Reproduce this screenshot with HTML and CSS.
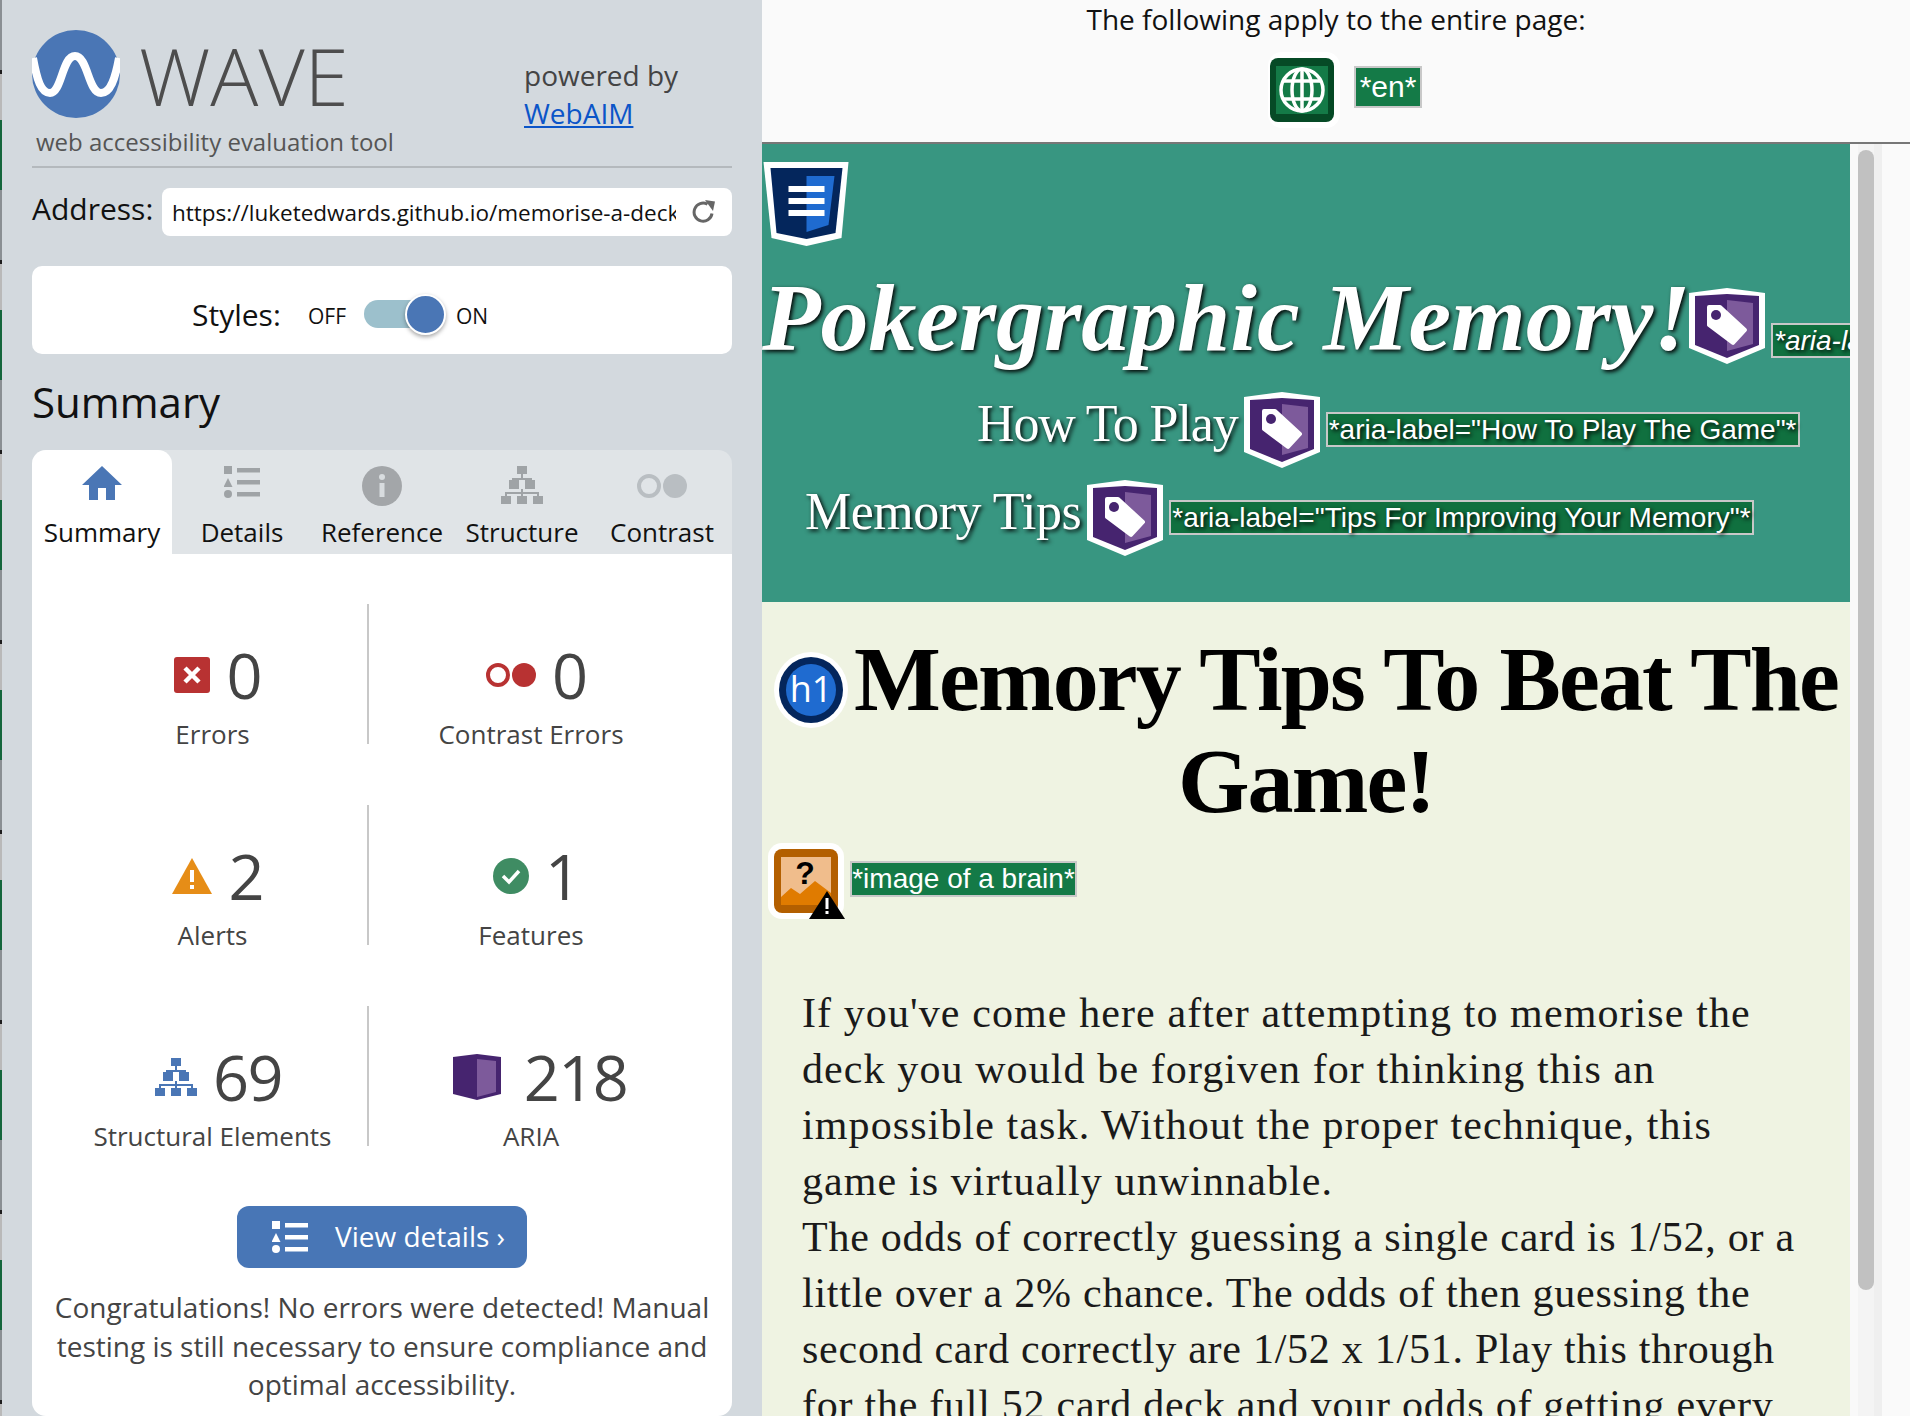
FILE: index.html
```html
<!DOCTYPE html>
<html lang="en">
<head>
<meta charset="utf-8">
<title>WAVE report</title>
<link rel="stylesheet" href="styles.css">
</head>
<body>
<svg class="defs" width="0" height="0" aria-hidden="true">
  <symbol id="tag" viewBox="0 0 76 76">
    <path d="M0 5 L38 0 L76 5 V60 L38 76 L0 60Z" fill="#fff"/>
    <path d="M6 8 L38 6 L70 8 V57 L38 70 L6 57Z" fill="#46246f"/>
    <path d="M38 12 L64 15 V56 L38 63Z" fill="#7d5a9b"/>
    <path d="M20 19 H31 L56 42 L44 55 L20 37Z" fill="#fff" stroke="#fff" stroke-width="4" stroke-linejoin="round"/>
    <circle cx="27" cy="27" r="5" fill="#46246f"/>
  </symbol>
  <symbol id="tree" viewBox="0 0 42 38">
    <rect x="16" y="0" width="10" height="8"/><rect x="20" y="8" width="2" height="5"/>
    <rect x="11" y="12" width="20" height="2"/><rect x="8" y="14" width="10" height="9"/><rect x="24" y="14" width="10" height="9"/>
    <rect x="4" y="26" width="34" height="2"/><rect x="4" y="26" width="2" height="4"/><rect x="20" y="23" width="2" height="7"/><rect x="36" y="26" width="2" height="4"/>
    <rect x="0" y="30" width="10" height="8"/><rect x="16" y="30" width="10" height="8"/><rect x="32" y="30" width="10" height="8"/>
  </symbol>
  <symbol id="list" viewBox="0 0 36 32">
    <rect x="0" y="0" width="8" height="8"/><path d="M4 12 L8.500 21 H-.5Z"/><circle cx="4" cy="28" r="4"/>
    <rect x="13" y="2" width="23" height="4.500"/><rect x="13" y="14" width="23" height="4.500"/><rect x="13" y="26" width="23" height="4.500"/>
  </symbol>
</svg>

<div class="app">
  <div class="edge"></div>
  <aside class="sidebar">
    <header class="brand">
      <div class="brand-left">
        <div class="logo-row">
          <svg class="logo" viewBox="0 0 88 88"><circle cx="44" cy="44" r="44" fill="#4a76b5"/><path d="M1 28 C5 50 9 63 18 63 C30 63 30 26 43 26 C56 26 56 63 69 63 C78 63 83 50 87 28" fill="none" stroke="#fff" stroke-width="8"/></svg>
          <span class="wave">WAVE</span>
        </div>
        <div class="tagline">web accessibility evaluation tool</div>
      </div>
      <div class="powered">powered by<br><a href="#">WebAIM</a></div>
    </header>
    <div class="address">
      <label class="address-label">Address:</label>
      <div class="address-box">
        <span class="url">https://luketedwards.github.io/memorise-a-deck</span>
        <svg class="reload" viewBox="0 0 24 24"><path d="M20 13.500 A9 9 0 1 1 15.500 4.300" fill="none" stroke="#666" stroke-width="3"/><path d="M13 0 L23 1.500 L21 11Z" fill="#666"/></svg>
      </div>
    </div>
    <div class="styles-card">
      <span class="styles-label">Styles:</span>
      <span class="onoff off">OFF</span>
      <span class="toggle"><span class="knob"></span></span>
      <span class="onoff">ON</span>
    </div>
    <h2 class="summary-title">Summary</h2>
    <nav class="tabs">
      <div class="tab active">
        <svg class="tab-icon" width="40" height="34" viewBox="0 0 40 34"><path d="M20 0 L40 19 H33 V34 H24 V22 H16 V34 H7 V19 H0Z" fill="#4a76b5"/></svg>
        <span>Summary</span>
      </div>
      <div class="tab">
        <svg class="tab-icon grey" width="36" height="32"><use href="#list"/></svg>
        <span>Details</span>
      </div>
      <div class="tab">
        <svg class="tab-icon" width="40" height="40" viewBox="0 0 40 40"><circle cx="20" cy="20" r="20" fill="#a3a6a9"/><circle cx="20" cy="11" r="3" fill="#d8dcdf"/><rect x="17.500" y="17" width="5" height="14" fill="#d8dcdf"/></svg>
        <span>Reference</span>
      </div>
      <div class="tab">
        <svg class="tab-icon grey" width="42" height="38"><use href="#tree"/></svg>
        <span>Structure</span>
      </div>
      <div class="tab">
        <svg class="tab-icon low" width="50" height="24" viewBox="0 0 50 24"><circle cx="12" cy="12" r="10" fill="none" stroke="#b9bec2" stroke-width="4"/><circle cx="38" cy="12" r="12" fill="#b9bec2"/></svg>
        <span>Contrast</span>
      </div>
    </nav>
    <section class="panel">
      <div class="stats">
        <div class="stat left">
          <div class="stat-top"><svg class="ic" width="36" height="36" viewBox="0 0 36 36"><rect width="36" height="36" rx="3" fill="#b83232"/><path d="M11 11 L25 25 M25 11 L11 25" stroke="#fff" stroke-width="4.500"/></svg><span class="num">0</span></div>
          <div class="stat-label">Errors</div>
        </div>
        <div class="stat">
          <div class="stat-top"><svg class="ic" width="50" height="24" viewBox="0 0 50 24"><circle cx="12" cy="12" r="10" fill="none" stroke="#b83232" stroke-width="4"/><circle cx="38" cy="12" r="12" fill="#b83232"/></svg><span class="num">0</span></div>
          <div class="stat-label">Contrast Errors</div>
        </div>
        <div class="stat left">
          <div class="stat-top"><svg class="ic" width="40" height="36" viewBox="0 0 40 36"><path d="M20 0 L40 36 H0Z" fill="#e68d17"/><rect x="18" y="12" width="4" height="12" fill="#fff"/><rect x="18" y="27" width="4" height="4" fill="#fff"/></svg><span class="num">2</span></div>
          <div class="stat-label">Alerts</div>
        </div>
        <div class="stat">
          <div class="stat-top"><svg class="ic" width="36" height="36" viewBox="0 0 36 36"><circle cx="18" cy="18" r="18" fill="#3f8c63"/><path d="M10 18 L16 24 L26 13" fill="none" stroke="#fff" stroke-width="3.500"/></svg><span class="num">1</span></div>
          <div class="stat-label">Features</div>
        </div>
        <div class="stat left">
          <div class="stat-top"><svg class="ic blue" width="42" height="38"><use href="#tree"/></svg><span class="num tight">69</span></div>
          <div class="stat-label">Structural Elements</div>
        </div>
        <div class="stat">
          <div class="stat-top wide"><svg class="ic" width="48" height="46" viewBox="0 0 48 46"><path d="M0 3 L24 0 L48 3 V40 L24 46 L0 40Z" fill="#46246f"/><path d="M24 5 L43 7 V38 L24 43Z" fill="#7d5a9b"/></svg><span class="num tight">218</span></div>
          <div class="stat-label">ARIA</div>
        </div>
      </div>
      <a class="details-btn" href="#">
        <svg class="white-ic" width="36" height="32"><use href="#list"/></svg>
        <span class="details-text">View details ›</span>
      </a>
      <p class="congrats">Congratulations! No errors were detected! Manual testing is still necessary to ensure compliance and optimal accessibility.</p>
    </section>
  </aside>

  <main class="report">
    <div class="page-bar">
      <div class="page-bar-title">The following apply to the entire page:</div>
      <div class="page-bar-items">
        <svg width="72" height="76" viewBox="0 0 72 76">
          <rect width="72" height="76" rx="14" fill="#fff"/>
          <rect x="2" y="6" width="64" height="64" rx="8" fill="#064a26"/>
          <rect x="8" y="14" width="52" height="48" fill="#147a47"/>
          <g fill="none" stroke="#fff" stroke-width="3.500"><circle cx="34" cy="38" r="21"/><ellipse cx="34" cy="38" rx="10" ry="21"/><path d="M34 17 V59 M15 29 H53 M15 47 H53"/></g>
        </svg>
        <span class="badge en">*en*</span>
      </div>
    </div>
    <div class="viewport">
      <div class="content">
        <header class="hero">
          <svg class="shield" width="86" height="84" viewBox="0 0 85 84">
            <path d="M0 0 H85 L78 76 L43 84 L8 76Z" fill="#fff"/>
            <path d="M7 6 H79 L72 71 L43 77 L13 71Z" fill="#04265c"/>
            <path d="M43 14 H71 L65 63 L43 70Z" fill="#1f6bd0"/>
            <path d="M25 24 H61 V30 H25Z M25 36 H61 V42 H25Z M25 48 H61 V54 H25Z" fill="#fff"/>
          </svg>
          <div class="hero-row title-row">
            <span class="site-title">Pokergraphic Memory!</span>
            <svg class="tag first" width="76" height="76"><use href="#tag"/></svg>
            <span class="badge aria italic">*aria-label="Pokergraphic Memory Home"*</span>
          </div>
          <div class="hero-row nav-a">
            <span class="nav-link">How To Play</span>
            <svg class="tag" width="76" height="76"><use href="#tag"/></svg>
            <span class="badge aria">*aria-label="How To Play The Game"*</span>
          </div>
          <div class="hero-row nav-b">
            <span class="nav-link">Memory Tips</span>
            <svg class="tag" width="76" height="76"><use href="#tag"/></svg>
            <span class="badge aria">*aria-label="Tips For Improving Your Memory"*</span>
          </div>
        </header>
        <article class="article">
          <h1 class="headline"><svg class="h1-icon" width="74" height="76" viewBox="0 0 74 76"><ellipse cx="37" cy="38" rx="37" ry="38" fill="#fff"/><ellipse cx="37" cy="38" rx="32" ry="33" fill="#04265c"/><ellipse cx="37" cy="38" rx="25" ry="26" fill="#1f6bd0"/><text x="37" y="50" class="h1-text" text-anchor="middle">h1</text></svg>Memory Tips To Beat The Game!</h1>
          <div class="img-row">
            <svg width="78" height="76" viewBox="0 0 78 76">
              <rect width="76" height="76" rx="14" fill="#fff"/>
              <rect x="6" y="6" width="64" height="64" rx="8" fill="#b35f00"/>
              <rect x="13" y="14" width="50" height="48" fill="#f0bd8c"/>
              <path d="M13 62 V54 L23 45 L32 51 L47 38 L63 50 V62Z" fill="#e07b00"/>
              <text x="37" y="41" class="q-text" text-anchor="middle">?</text>
              <path d="M59 48 L77 76 H41Z" fill="#000"/><rect x="57.500" y="55" width="3" height="11" fill="#fff"/><rect x="57.500" y="68" width="3" height="3" fill="#fff"/>
            </svg>
            <span class="badge alt">*image of a brain*</span>
          </div>
          <p class="body-text">If you've come here after attempting to memorise the<br>deck you would be forgiven for thinking this an<br>impossible task. Without the proper technique, this<br>game is virtually unwinnable.<br><span class="odds">The odds of correctly guessing a single card is 1/52, or a<br>little over a 2% chance. The odds of then guessing the<br>second card correctly are 1/52 x 1/51. Play this through<br>for the full 52 card deck and your odds of getting every</span></p>
        </article>
      </div>
      <div class="scrollbar"><div class="thumb"></div></div>
    </div>
  </main>
</div>
</body>
</html>
```
FILE: styles.css
```css
* { box-sizing: border-box; }
html, body { margin: 0; height: 1416px; overflow: hidden; }
body { font-family: "Open Sans", sans-serif; background: #fafafa; color: #000; }
.defs { position: absolute; }
.app { display: flex; width: 1910px; height: 1416px; overflow: hidden; }
.edge { width: 2px; flex: none; background: repeating-linear-gradient(#8a8f93 0 70px, #1d1d1d 70px 74px, #b9b9b9 74px 120px, #14663c 120px 190px); }

.sidebar { width: 760px; flex: none; background: #d3d9de; padding: 30px 30px 0; display: flex; flex-direction: column; height: 1416px; overflow: hidden; }
.brand { display: flex; height: 138px; border-bottom: 2px solid #b4b9bd; }
.brand-left { width: 492px; }
.logo-row { display: flex; align-items: center; gap: 19px; height: 88px; }
.logo { width: 88px; height: 88px; flex: none; }
.wave { font-size: 80px; font-weight: 300; line-height: 88px; color: #4d4d4d; position: relative; top: 1px; }
.tagline { font-size: 24px; line-height: 34px; color: #555; padding-left: 4px; margin-top: 7px; }
.powered { font-size: 28px; line-height: 38px; color: #444; padding-top: 26px; }
.powered a { color: #0b55c8; }

.address { display: flex; align-items: center; margin-top: 20px; height: 48px; }
.address-label { font-size: 30px; width: 130px; color: #111; position: relative; top: -4px; }
.address-box { flex: 1; height: 48px; background: #fff; border-radius: 8px; display: flex; align-items: center; padding-left: 10px; }
.url { width: 504px; flex: none; font-size: 22.500px; white-space: nowrap; overflow: hidden; color: #111; }
.reload { width: 24px; height: 24px; margin-left: 16px; }

.styles-card { margin-top: 30px; height: 88px; background: #fff; border-radius: 10px; display: flex; align-items: center; padding: 10px 0 0 160px; }
.styles-label { font-size: 30px; width: 116px; color: #111; position: relative; top: -1px; }
.onoff { font-size: 21px; color: #111; position: relative; top: 1px; }
.onoff.off { width: 56px; }
.toggle { width: 82px; height: 41px; position: relative; top: -1px; margin-right: 10px; display: block; }
.toggle::before { content: ""; position: absolute; left: 0; top: 6px; width: 70px; height: 28px; background: #9cc0cc; border-radius: 14px; }
.knob { position: absolute; left: 41px; top: 0; width: 41px; height: 41px; border-radius: 50%; background: #4a76b5; border: 2px solid #fff; box-shadow: 0 2px 4px rgba(0,0,0,.35); }

.summary-title { font-size: 42px; font-weight: 400; line-height: 56px; margin: 20px 0 20px; color: #111; }

.tabs { display: flex; height: 104px; background: #e0e4e7; border-radius: 14px 14px 0 0; flex: none; }
.tab { width: 140px; display: flex; flex-direction: column; align-items: center; font-size: 26px; color: #111; position: relative; padding-top: 16px; }
.tab span { position: absolute; top: 64px; white-space: nowrap; }
.tab.active { background: #fff; border-radius: 14px 14px 0 0; }
.tab-icon.low { margin-top: 8px; }
.grey { fill: #9fa3a6; }
.blue { fill: #4a76b5; }
.white-ic { fill: #fff; flex: none; }

.panel { flex: 1; background: #fff; border-radius: 0 0 14px 14px; padding: 50px 0 0; }
.stats { display: grid; grid-template-columns: 313px 324px; grid-auto-rows: 140px; row-gap: 61px; margin-left: 24px; }
.stat { display: flex; flex-direction: column; align-items: center; padding-top: 39px; }
.stat.left { border-right: 2px solid #c8c8c8; padding-left: 2px; }
.stat-top { display: flex; align-items: center; gap: 16px; height: 64px; padding-left: 12px; }
.stat-top.wide { gap: 23px; padding-left: 18px; }
.ic { flex: none; }
.num { font-size: 63px; line-height: 64px; color: #444; }
.num.tight { letter-spacing: -1.500px; }
.stat-label { font-size: 26px; line-height: 36px; color: #444; margin-top: 9px; white-space: nowrap; }

.details-btn { display: flex; align-items: center; gap: 27px; width: 290px; height: 62px; margin: 60px auto 0; background: #4876b6; border-radius: 12px; padding-left: 35px; color: #fff; font-size: 28px; text-decoration: none; }
.details-text { position: relative; top: -1px; }
.congrats { margin: 20px 10px 0; font-size: 28px; line-height: 38.500px; text-align: center; color: #444; }

.report { flex: 1; min-width: 0; display: flex; flex-direction: column; height: 1416px; }
.page-bar { height: 144px; flex: none; background: #fafafa; border-bottom: 2px solid #777; }
.page-bar-title { font-size: 28px; line-height: 38px; height: 40px; text-align: center; color: #111; }
.page-bar-items { display: flex; align-items: flex-start; margin-top: 12px; padding-left: 506px; gap: 14px; }
.badge { display: inline-block; white-space: nowrap; background: #147a47; border: 2px solid #c8c8c8; color: #fff; font-family: "Liberation Sans", sans-serif; }
.badge.en { font-size: 30px; line-height: 38px; height: 42px; width: 68px; text-align: center; margin-top: 14px; }

.viewport { flex: 1; display: flex; min-height: 0; }
.content { width: 1088px; flex: none; overflow: hidden; background: #eff3e2; }
.scrollbar { flex: 1; background: linear-gradient(90deg, #f9f9f9 0 8px, #f4f4f4 8px 24px, #efefef 24px 32px, #fafafa 32px); padding: 6px 0 0 8px; }
.thumb { width: 16px; height: 1140px; background: #c1c1c1; border-radius: 8px; }

.hero { height: 458px; background: #389681; padding-top: 18px; overflow: hidden; }
.shield { display: block; margin-left: 1px; }
.hero-row { display: flex; align-items: flex-start; white-space: nowrap; color: #fff; text-shadow: 2px 2px 4px #000; }
.title-row { margin-top: 42px; }
.nav-a { margin-top: 28px; margin-left: 215px; }
.nav-b { margin-top: 12px; margin-left: 43px; }
.site-title { font-family: "Liberation Serif", serif; font-style: italic; font-weight: 700; font-size: 96px; letter-spacing: -.1px; line-height: 76px; width: 926px; flex: none; position: relative; top: -8px; }
.nav-link { font-family: "Liberation Serif", serif; font-size: 52px; letter-spacing: -1.100px; line-height: 76px; position: relative; top: -6px; }
.nav-b .nav-link { letter-spacing: -.5px; }
.tag { flex: none; margin-left: 6px; }
.tag.first { margin-left: 1px; }
.badge.aria { font-size: 28px; line-height: 31px; height: 35px; background: #10703f; margin-left: 6px; margin-top: 20px; padding: 0 1px; }
.badge.italic { font-style: italic; margin-top: 35px; }

.article { padding-top: 26px; }
.headline { font-family: "Liberation Serif", serif; font-weight: 700; font-size: 92px; letter-spacing: -1.900px; line-height: 102px; text-align: center; margin: 0; }
.h1-icon { vertical-align: -18px; margin-right: 6px; }
.h1-text { font-family: "Open Sans", sans-serif; font-size: 36px; font-weight: 400; letter-spacing: 0; fill: #fff; }
.q-text { font-family: "Liberation Sans", sans-serif; font-size: 32px; font-weight: 700; fill: #000; }
.img-row { display: flex; align-items: flex-start; gap: 4px; margin: 11px 0 0 6px; }
.badge.alt { font-size: 28px; line-height: 32px; height: 36px; width: 227px; text-align: center; margin-top: 18px; }
.body-text { font-family: "Liberation Serif", serif; font-size: 42px; letter-spacing: 1.100px; line-height: 56px; margin: 66px 0 0 40px; white-space: nowrap; color: #1a1a1a; }
.odds { letter-spacing: .750px; }
```
